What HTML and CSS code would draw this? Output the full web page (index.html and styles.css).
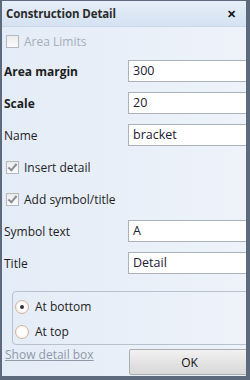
FILE: index.html
```html
<!DOCTYPE html>
<html lang="en">
<head>
    <meta charset="UTF-8">
    <title>Construction Detail</title>
    <link rel="stylesheet" href="styles.css">
</head>
<body>
    <div class="dialog">
        <div class="titlebar">
            <span class="title">Construction Detail</span>
            <span class="close">&#x2715;</span>
        </div>

        <div class="content">
            <label class="check disabled"><span class="box"></span>Area Limits</label>

            <div class="row"><span class="lbl bold">Area margin</span><div class="field">300</div></div>
            <div class="row"><span class="lbl bold">Scale</span><div class="field">20</div></div>
            <div class="row"><span class="lbl">Name</span><div class="field">bracket</div></div>

            <label class="check"><span class="box checked"></span>Insert detail</label>
            <label class="check"><span class="box checked"></span>Add symbol/title</label>

            <div class="row"><span class="lbl">Symbol text</span><div class="field">A</div></div>
            <div class="row"><span class="lbl">Title</span><div class="field">Detail</div></div>

            <div class="group">
                <label class="radio"><span class="dot on"></span>At bottom</label>
                <label class="radio"><span class="dot"></span>At top</label>
            </div>

            <div class="footer">
                <a class="link">Show detail box</a>
                <button class="ok">OK</button>
            </div>
        </div>
    </div>
</body>
</html>
```

FILE: styles.css
```css
body {
    margin: 0;
    font-family: 'Open Sans', 'Noto Sans', sans-serif;
    font-size: 12px;
    color: #1e1e1e;
}
.dialog {
    width: 250px;
    height: 380px;
    box-sizing: border-box;
    border-left: 2px solid #5d6a7e;
    border-top: 1px solid #5d6a7e;
    border-right: 4px solid #5d6a7e;
    border-bottom: 4px solid #5d6a7e;
    background: linear-gradient(to right, #e4ecf7, #eef3fa);
    overflow: hidden;
}
.titlebar {
    height: 25px;
    display: flex;
    align-items: center;
    justify-content: space-between;
    padding: 0 10px 0 4px;
    background: linear-gradient(to bottom, #e6eef8, #d5e2f2);
    border-bottom: 1px solid #c9d7e9;
}
.title {
    font-weight: bold;
    font-size: 11.5px;
    color: #2c2c2c;
    letter-spacing: -0.1px;
}
.close {
    font-size: 11px;
    font-weight: bold;
    color: #111;
}
.content {
    padding: 0 0 0 1px;
}
.check {
    display: flex;
    align-items: center;
    gap: 5px;
    height: 32px;
    padding-left: 3px;
}
.check.disabled {
    height: 24px;
    color: #a6adb8;
    margin: 2px 0 2px;
}
.box {
    width: 11px;
    height: 11px;
    border: 1px solid #b4b9c0;
    background: linear-gradient(to bottom, #ececec, #fafafa);
    position: relative;
}
.box.checked::after {
    content: "";
    position: absolute;
    left: 3px;
    top: 0px;
    width: 3px;
    height: 7px;
    border-right: 2px solid #8a8f96;
    border-bottom: 2px solid #8a8f96;
    transform: rotate(40deg);
}
.row {
    display: flex;
    align-items: center;
    height: 32px;
}
.lbl {
    width: 124px;
    padding-left: 1px;
}
.bold {
    font-weight: bold;
    font-size: 12px;
}
.field {
    flex: 1;
    height: 22px;
    line-height: 20px;
    box-sizing: border-box;
    border: 1px solid #acb2ba;
    border-right: none;
    background: #fff;
    padding-left: 4px;
    color: #1c2030;
    font-size: 12.5px;
}
.group {
    margin: 12px -4px 0 9px;
    height: 54px;
    box-sizing: border-box;
    border: 1px solid #b8c2cf;
    border-radius: 4px;
    padding: 2px 0 0 2px;
}
.radio {
    display: flex;
    align-items: center;
    gap: 6px;
    height: 25px;
}
.dot {
    width: 12px;
    height: 12px;
    border: 1px solid #d0b59f;
    border-radius: 50%;
    background: radial-gradient(circle, #fff 40%, #f1e6dc);
    position: relative;
}
.dot.on::after {
    content: "";
    position: absolute;
    left: 4px;
    top: 4px;
    width: 4px;
    height: 4px;
    border-radius: 50%;
    background: #333;
}
.footer {
    display: flex;
    align-items: flex-start;
    justify-content: space-between;
    margin-top: 1px;
}
.link {
    color: #8f99a8;
    text-decoration: underline;
    padding-left: 2px;
    margin-top: 0;
}
.ok {
    width: 121px;
    height: 26px;
    margin-top: 3px;
    margin-right: -4px;
    border: 1px solid #a9acb0;
    border-radius: 2px;
    background: linear-gradient(to bottom, #f2f2f2, #e4e4e4 50%, #d9d9d9);
    font-family: inherit;
    font-size: 12px;
    color: #111;
}
```
